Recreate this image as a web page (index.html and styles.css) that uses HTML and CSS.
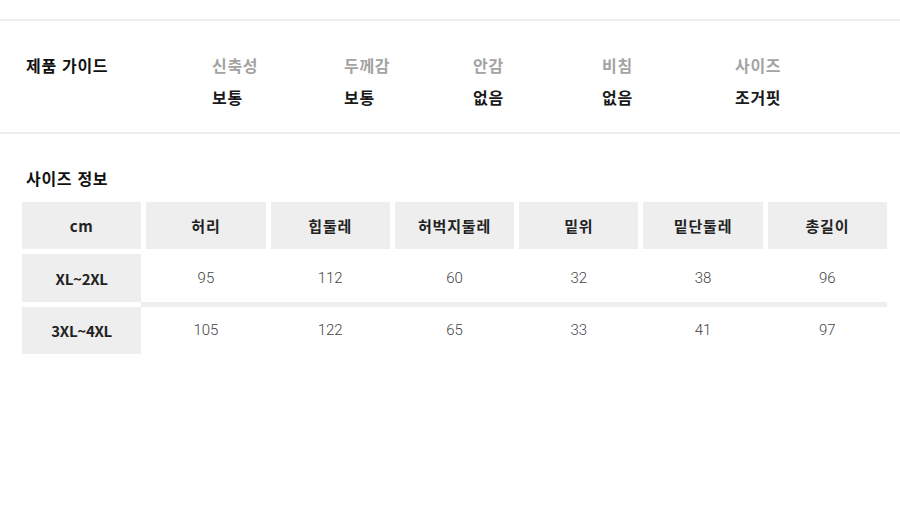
FILE: index.html
```html
<!DOCTYPE html>
<html lang="ko">
<head>
<meta charset="utf-8">
<title>제품 가이드</title>
<link rel="stylesheet" href="styles.css">
</head>
<body>
<section class="guide">
  <h2 class="guide-title">제품 가이드</h2>
  <div class="guide-item"><span class="guide-label">신축성</span><span class="guide-value">보통</span></div>
  <div class="guide-item"><span class="guide-label">두께감</span><span class="guide-value">보통</span></div>
  <div class="guide-item"><span class="guide-label">안감</span><span class="guide-value">없음</span></div>
  <div class="guide-item"><span class="guide-label">비침</span><span class="guide-value">없음</span></div>
  <div class="guide-item"><span class="guide-label">사이즈</span><span class="guide-value">조거핏</span></div>
</section>
<section class="size">
  <h2 class="size-title">사이즈 정보</h2>
  <div class="size-table">
    <div class="cell head">cm</div>
    <div class="cell head">허리</div>
    <div class="cell head">힙둘레</div>
    <div class="cell head">허벅지둘레</div>
    <div class="cell head">밑위</div>
    <div class="cell head">밑단둘레</div>
    <div class="cell head">총길이</div>

    <div class="spacer"></div>

    <div class="cell rowhead">XL~2XL</div>
    <div class="cell num">95</div>
    <div class="cell num">112</div>
    <div class="cell num">60</div>
    <div class="cell num">32</div>
    <div class="cell num">38</div>
    <div class="cell num">96</div>

    <div class="band"></div>

    <div class="cell rowhead">3XL~4XL</div>
    <div class="cell num">105</div>
    <div class="cell num">122</div>
    <div class="cell num">65</div>
    <div class="cell num">33</div>
    <div class="cell num">41</div>
    <div class="cell num">97</div>
  </div>
</section>
</body>
</html>
```

FILE: styles.css
```css
html, body {
  margin: 0;
  padding: 0;
  background: #fff;
}
body {
  padding-top: 19px;
  font-family: "Noto Sans CJK KR", "Noto Sans", sans-serif;
  color: #222;
}
.guide {
  border-top: 2px solid #eee;
  border-bottom: 2px solid #eee;
  padding: 28px 0 19px 26px;
  display: grid;
  grid-template-columns: 186px 132px 129px 129px 133px 1fr;
  align-items: start;
}
.guide-title {
  margin: 0;
  font-size: 16px;
  font-weight: 700;
  line-height: 32px;
  letter-spacing: 0.7px;
  color: #111;
}
.guide-item {
  display: flex;
  flex-direction: column;
}
.guide-label {
  font-size: 16px;
  font-weight: 700;
  line-height: 32px;
  letter-spacing: 0.7px;
  color: #a3a3a3;
}
.guide-value {
  font-size: 16px;
  font-weight: 700;
  line-height: 32px;
  letter-spacing: 0.7px;
  color: #1a1a1a;
}
.size {
  padding: 32px 0 0 22px;
}
.size-title {
  margin: 0 0 12px 4px;
  font-size: 16px;
  font-weight: 700;
  line-height: 24px;
  letter-spacing: 0.7px;
  color: #111;
}
.size-table {
  width: 865px;
  display: grid;
  grid-template-columns: repeat(7, 1fr);
  grid-template-rows: 47px 5px 48px 5px 47px;
  column-gap: 5px;
}
.cell {
  display: flex;
  align-items: center;
  justify-content: center;
}
.head {
  background: #eee;
  font-size: 15px;
  font-weight: 700;
  letter-spacing: 0.8px;
  color: #222;
}
.rowhead {
  background: #eee;
  font-size: 15px;
  font-weight: 700;
  color: #222;
  letter-spacing: -0.3px;
}
.num {
  font-family: Roboto, "Liberation Sans", sans-serif;
  font-weight: 300;
  font-size: 15px;
  color: #444;
  padding-bottom: 1px;
}
.spacer {
  grid-column: 1 / -1;
}
.band {
  grid-column: 2 / -1;
  margin-left: -5px;
  background: #eee;
}
```
